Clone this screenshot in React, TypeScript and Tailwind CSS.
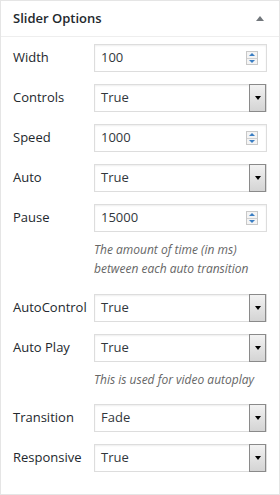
import React from "react";

const font = { fontFamily: '"Segoe UI", "Open Sans", "Noto Sans", sans-serif' };

function Spinner() {
  return (
    <div className="flex h-[14px] w-[12px] flex-col border border-[#c8c8c8] bg-[#f4f4f4]">
      <div className="flex flex-1 items-center justify-center border-b border-[#d0d0d0]">
        <div className="h-0 w-0 border-x-[3px] border-b-[3px] border-x-transparent border-b-[#3b7fc4]" />
      </div>
      <div className="flex flex-1 items-center justify-center">
        <div className="h-0 w-0 border-x-[3px] border-t-[3px] border-x-transparent border-t-[#3b7fc4]" />
      </div>
    </div>
  );
}

function NumberField({ value }: { value: string }) {
  return (
    <div className="flex h-[28px] flex-1 items-center border border-[#dddddd] bg-white pl-[6px] pr-[8px] text-[13px] text-[#32373c] shadow-[inset_0_1px_2px_rgba(0,0,0,0.07)]">
      <span className="flex-1">{value}</span>
      <Spinner />
    </div>
  );
}

function SelectField({ value }: { value: string }) {
  return (
    <div className="flex h-[28px] flex-1 items-stretch border border-[#dddddd] bg-white pl-[6px] text-[13px] text-[#32373c] shadow-[inset_0_1px_2px_rgba(0,0,0,0.07)]">
      <span className="flex flex-1 items-center">{value}</span>
      <div className="my-[-1px] flex w-[17px] items-center justify-center border border-[#8a8a8a] bg-gradient-to-b from-[#f2f2f2] to-[#d4d4d4]">
        <div className="h-0 w-0 border-x-[3px] border-t-[4px] border-x-transparent border-t-black" />
      </div>
    </div>
  );
}

function Row({ label, children }: { label: string; children: React.ReactNode }) {
  return (
    <div className="flex items-center">
      <div className="w-[81px] shrink-0 text-[13px] text-[#23282d]">{label}</div>
      {children}
    </div>
  );
}

function Note({ children }: { children: React.ReactNode }) {
  return (
    <p className="pl-[81px] pt-[8px] text-[12px] italic leading-[19px] text-[#666666]">{children}</p>
  );
}

export default function App() {
  return (
    <div style={font} className="h-[495px] w-[280px] border border-[#e5e5e5] bg-white">
      <div className="flex h-[36px] items-center justify-between border-b border-[#eeeeee] pl-[12px] pr-[15px]">
        <h2 className="text-[13px] font-semibold text-[#23282d]">Slider Options</h2>
        <div className="h-0 w-0 border-x-[4px] border-b-[5px] border-x-transparent border-b-[#72777c]" />
      </div>
      <div className="flex flex-col pl-[12px] pr-[12px] pt-[7px]">
        <Row label="Width"><NumberField value="100" /></Row>
        <div className="h-[12px]" />
        <Row label="Controls"><SelectField value="True" /></Row>
        <div className="h-[12px]" />
        <Row label="Speed"><NumberField value="1000" /></Row>
        <div className="h-[12px]" />
        <Row label="Auto"><SelectField value="True" /></Row>
        <div className="h-[12px]" />
        <Row label="Pause"><NumberField value="15000" /></Row>
        <Note>The amount of time (in ms) between each auto transition</Note>
        <div className="h-[16px]" />
        <Row label="AutoControl"><SelectField value="True" /></Row>
        <div className="h-[12px]" />
        <Row label="Auto Play"><SelectField value="True" /></Row>
        <Note>This is used for video autoplay</Note>
        <div className="h-[15px]" />
        <Row label="Transition"><SelectField value="Fade" /></Row>
        <div className="h-[12px]" />
        <Row label="Responsive"><SelectField value="True" /></Row>
      </div>
    </div>
  );
}
